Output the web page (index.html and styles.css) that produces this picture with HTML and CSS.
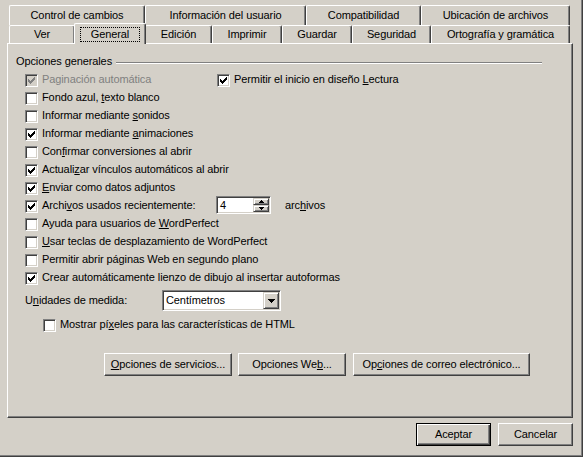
FILE: index.html
```html
<!DOCTYPE html>
<html lang="es">
<head>
<meta charset="utf-8">
<title>Opciones</title>
<link rel="stylesheet" href="styles.css">
</head>
<body>
<div class="window">
  <div class="tabs">
    <div class="tab-row back">
      <div class="tab t-control">Control de cambios</div>
      <div class="tab t-info">Información del usuario</div>
      <div class="tab t-compat">Compatibilidad</div>
      <div class="tab t-ubic">Ubicación de archivos</div>
    </div>
    <div class="tab-row front">
      <div class="tab t-ver">Ver</div>
      <div class="tab t-general selected"><span class="focus">General</span></div>
      <div class="tab t-edicion">Edición</div>
      <div class="tab t-imprimir">Imprimir</div>
      <div class="tab t-guardar">Guardar</div>
      <div class="tab t-seguridad">Seguridad</div>
      <div class="tab t-orto">Ortografía y gramática</div>
    </div>
  </div>

  <div class="panel">
    <div class="group-title"><span>Opciones generales</span><span class="etch"></span></div>

    <div class="options">
      <div class="row">
        <div class="check disabled col-a"><span class="cb"><svg width="7" height="7" viewBox="0 0 7 7" shape-rendering="crispEdges"><path d="M0 2h1v3H0zM1 3h1v3H1zM2 4h1v3H2zM3 3h1v3H3zM4 2h1v3H4zM5 1h1v3H5zM6 0h1v3H6z"/></svg></span><span class="lbl">Paginación automática</span></div>
        <div class="check"><span class="cb"><svg width="7" height="7" viewBox="0 0 7 7" shape-rendering="crispEdges"><path d="M0 2h1v3H0zM1 3h1v3H1zM2 4h1v3H2zM3 3h1v3H3zM4 2h1v3H4zM5 1h1v3H5zM6 0h1v3H6z"/></svg></span><span class="lbl">Permitir el inicio en diseño <u>L</u>ectura</span></div>
      </div>
      <div class="row">
        <div class="check"><span class="cb"></span><span class="lbl">Fondo azul, <u>t</u>exto blanco</span></div>
      </div>
      <div class="row">
        <div class="check"><span class="cb"></span><span class="lbl">Informar mediante <u>s</u>onidos</span></div>
      </div>
      <div class="row">
        <div class="check"><span class="cb"><svg width="7" height="7" viewBox="0 0 7 7" shape-rendering="crispEdges"><path d="M0 2h1v3H0zM1 3h1v3H1zM2 4h1v3H2zM3 3h1v3H3zM4 2h1v3H4zM5 1h1v3H5zM6 0h1v3H6z"/></svg></span><span class="lbl">Informar mediante <u>a</u>nimaciones</span></div>
      </div>
      <div class="row">
        <div class="check"><span class="cb"></span><span class="lbl">Con<u>f</u>irmar conversiones al abrir</span></div>
      </div>
      <div class="row">
        <div class="check"><span class="cb"><svg width="7" height="7" viewBox="0 0 7 7" shape-rendering="crispEdges"><path d="M0 2h1v3H0zM1 3h1v3H1zM2 4h1v3H2zM3 3h1v3H3zM4 2h1v3H4zM5 1h1v3H5zM6 0h1v3H6z"/></svg></span><span class="lbl">Actuali<u>z</u>ar vínculos automáticos al abrir</span></div>
      </div>
      <div class="row">
        <div class="check"><span class="cb"><svg width="7" height="7" viewBox="0 0 7 7" shape-rendering="crispEdges"><path d="M0 2h1v3H0zM1 3h1v3H1zM2 4h1v3H2zM3 3h1v3H3zM4 2h1v3H4zM5 1h1v3H5zM6 0h1v3H6z"/></svg></span><span class="lbl"><u>E</u>nviar como datos adjuntos</span></div>
      </div>
      <div class="row">
        <div class="check col-files"><span class="cb"><svg width="7" height="7" viewBox="0 0 7 7" shape-rendering="crispEdges"><path d="M0 2h1v3H0zM1 3h1v3H1zM2 4h1v3H2zM3 3h1v3H3zM4 2h1v3H4zM5 1h1v3H5zM6 0h1v3H6z"/></svg></span><span class="lbl">Archi<u>v</u>os usados recientemente:</span></div>
        <div class="spin">
          <span class="spin-val">4</span>
          <div class="spin-btns">
            <span class="sbtn"><svg width="5" height="3" viewBox="0 0 5 3" shape-rendering="crispEdges"><path d="M2 0h1v1H2zM1 1h3v1H1zM0 2h5v1H0z"/></svg></span>
            <span class="sbtn"><svg width="5" height="3" viewBox="0 0 5 3" shape-rendering="crispEdges"><path d="M0 0h5v1H0zM1 1h3v1H1zM2 2h1v1H2z"/></svg></span>
          </div>
        </div>
        <span class="files-label">arc<u>h</u>ivos</span>
      </div>
      <div class="row">
        <div class="check"><span class="cb"></span><span class="lbl">Ayuda para usuarios de <u>W</u>ordPerfect</span></div>
      </div>
      <div class="row">
        <div class="check"><span class="cb"></span><span class="lbl"><u>U</u>sar teclas de desplazamiento de WordPerfect</span></div>
      </div>
      <div class="row">
        <div class="check"><span class="cb"></span><span class="lbl">Permitir abrir páginas Web en se<u>g</u>undo plano</span></div>
      </div>
      <div class="row">
        <div class="check"><span class="cb"><svg width="7" height="7" viewBox="0 0 7 7" shape-rendering="crispEdges"><path d="M0 2h1v3H0zM1 3h1v3H1zM2 4h1v3H2zM3 3h1v3H3zM4 2h1v3H4zM5 1h1v3H5zM6 0h1v3H6z"/></svg></span><span class="lbl">Crear automáticamente lienzo de dibu<u>j</u>o al insertar autoformas</span></div>
      </div>

      <div class="row units-row">
        <span class="units-label">U<u>n</u>idades de medida:</span>
        <div class="select">
          <span class="select-val">Centímetros</span>
          <span class="drop-btn"><svg width="7" height="4" viewBox="0 0 7 4" shape-rendering="crispEdges"><path d="M0 0h7v1H0zM1 1h5v1H1zM2 2h3v1H2zM3 3h1v1H3z"/></svg></span>
        </div>
      </div>

      <div class="row mostrar">
        <div class="check"><span class="cb"></span><span class="lbl">Mostrar pí<u>x</u>eles para las características de HTML</span></div>
      </div>
    </div>

    <div class="svc-buttons">
      <button type="button" class="btn b-serv"><u>O</u>pciones de servicios...</button>
      <button type="button" class="btn b-web">Opciones We<u>b</u>...</button>
      <button type="button" class="btn b-mail">Op<u>c</u>iones de correo electrónico...</button>
    </div>
  </div>

  <div class="dialog-buttons">
    <button type="button" class="btn b-dlg default">Aceptar</button>
    <button type="button" class="btn b-dlg">Cancelar</button>
  </div>
</div>
</body>
</html>
```

FILE: styles.css
```css
html, body {
  margin: 0;
  padding: 0;
}

body {
  background: #D4D0C8;
  font-family: "Liberation Sans", Arial, sans-serif;
  font-size: 11px;
  letter-spacing: -0.1px;
  color: #000;
}

.window {
  width: 583px;
  height: 457px;
  box-sizing: border-box;
  padding: 5px 0 0 7px;
  border-right: 1px solid #404040;
  border-bottom: 1px solid #404040;
  box-shadow: inset -1px -1px 0 #808080;
  overflow: hidden;
}

/* ---------- tabs ---------- */
.tabs {
  margin-left: 2px;
  width: 561px;
}

.tab-row {
  display: flex;
  align-items: flex-start;
}

.tab-row.back {
  height: 20px;
}

.tab-row.front {
  height: 18px;
}

.tab {
  flex: none;
  box-sizing: border-box;
  background: #D4D0C8;
  border-top: 1px solid #fff;
  border-left: 1px solid #fff;
  border-right: 1px solid #404040;
  box-shadow: inset -1px 0 0 #808080;
  border-radius: 2px 2px 0 0;
  text-align: center;
  white-space: nowrap;
}

.back .tab {
  height: 20px;
  line-height: 19px;
}

.front .tab {
  height: 18px;
  line-height: 16px;
}

.t-control { width: 136px; }
.t-info { width: 161px; }
.t-compat { width: 115px; }
.t-ubic { width: 149px; }

.t-ver { width: 66px; }
.t-general { width: 70px; }
.t-edicion { width: 67px; }
.t-imprimir { width: 70px; }
.t-guardar { width: 70px; }
.t-seguridad { width: 79px; }
.t-orto { width: 139px; }

.front .tab.selected {
  position: relative;
  z-index: 1;
  width: 72px;
  height: 21px;
  margin: -2px -1px 0 -1px;
  padding-top: 3px;
  line-height: 13px;
}

.focus {
  display: inline-block;
  box-sizing: border-box;
  width: 60px;
  height: 15px;
  line-height: 13px;
  border: 1px dotted #000;
  vertical-align: top;
}

/* ---------- panel ---------- */
.panel {
  box-sizing: border-box;
  width: 566px;
  height: 375px;
  border: 1px solid;
  border-color: #fff #404040 #404040 #fff;
  box-shadow: inset -1px -1px 0 #808080;
  padding: 11px 30px 0 8px;
}

.group-title {
  display: flex;
  height: 13px;
  line-height: 13px;
  white-space: nowrap;
}

.etch {
  flex: 1;
  box-sizing: border-box;
  height: 2px;
  margin: 7px 0 0 4px;
  border-top: 1px solid #808080;
  border-bottom: 1px solid #fff;
}

.options {
  margin: 2px 0 0 9px;
}

.row {
  display: flex;
  align-items: flex-start;
  height: 18px;
  line-height: 18px;
  white-space: nowrap;
}

.check {
  display: flex;
  align-items: flex-start;
}

.cb {
  flex: none;
  box-sizing: border-box;
  width: 13px;
  height: 13px;
  margin: 4px 4px 0 0;
  padding: 2px;
  border: 1px solid;
  border-color: #808080 #fff #fff #808080;
  box-shadow: inset 1px 1px 0 #404040, inset -1px -1px 0 #D4D0C8;
  background: #fff;
}

.cb svg {
  display: block;
  fill: currentColor;
}

.lbl {
  white-space: pre;
}

.disabled {
  color: #808080;
}

.disabled .cb {
  background: #D4D0C8;
}

.col-a {
  width: 192px;
}

.col-files {
  width: 191px;
}

u {
  text-decoration: underline;
  text-underline-offset: 1px;
}

/* spin box */
.spin {
  display: flex;
  box-sizing: border-box;
  width: 55px;
  height: 18px;
  padding: 1px;
  border: 1px solid;
  border-color: #808080 #fff #fff #808080;
  box-shadow: inset 1px 1px 0 #404040, inset -1px -1px 0 #D4D0C8;
  background: #fff;
  line-height: 14px;
}

.spin-val {
  flex: 1;
  padding-left: 2px;
}

.spin-btns {
  display: flex;
  flex-direction: column;
  width: 16px;
}

.sbtn,
.drop-btn {
  display: flex;
  align-items: center;
  justify-content: center;
  box-sizing: border-box;
  border: 1px solid;
  border-color: #D4D0C8 #404040 #404040 #D4D0C8;
  box-shadow: inset 1px 1px 0 #fff, inset -1px -1px 0 #808080;
  background: #D4D0C8;
}

.sbtn {
  flex: 1;
}

.sbtn svg,
.drop-btn svg {
  display: block;
  fill: #000;
}

.files-label {
  margin-left: 14px;
}

/* units */
.units-row {
  margin-top: 4px;
  height: 21px;
  line-height: 21px;
}

.units-label {
  width: 137px;
}

.select {
  display: flex;
  box-sizing: border-box;
  width: 119px;
  height: 21px;
  padding: 1px;
  border: 1px solid;
  border-color: #808080 #fff #fff #808080;
  box-shadow: inset 1px 1px 0 #404040, inset -1px -1px 0 #D4D0C8;
  background: #fff;
  line-height: 17px;
}

.select-val {
  flex: 1;
  padding-left: 2px;
}

.drop-btn {
  width: 16px;
  height: 17px;
}

.mostrar {
  margin: 4px 0 0 18px;
}

/* buttons */
.svc-buttons {
  display: flex;
  margin: 20px 0 0 88px;
}

.btn {
  -webkit-appearance: none;
  appearance: none;
  box-sizing: border-box;
  height: 23px;
  margin: 0;
  padding: 0;
  border: 1px solid;
  border-color: #fff #404040 #404040 #fff;
  border-radius: 0;
  box-shadow: inset -1px -1px 0 #808080;
  background: #D4D0C8;
  font: inherit;
  letter-spacing: inherit;
  line-height: 21px;
  color: #000;
  text-align: center;
  white-space: nowrap;
}

.b-serv { width: 128px; }
.b-web { width: 108px; margin-left: 6px; }
.b-mail { width: 177px; margin-left: 7px; }

.dialog-buttons {
  display: flex;
  justify-content: flex-end;
  gap: 7px;
  width: 566px;
  margin-top: 5px;
}

.b-dlg {
  width: 75px;
}

.btn.default {
  border-color: #000;
  box-shadow: inset 1px 1px 0 #fff, inset -1px -1px 0 #404040, inset -2px -2px 0 #808080;
}
```
